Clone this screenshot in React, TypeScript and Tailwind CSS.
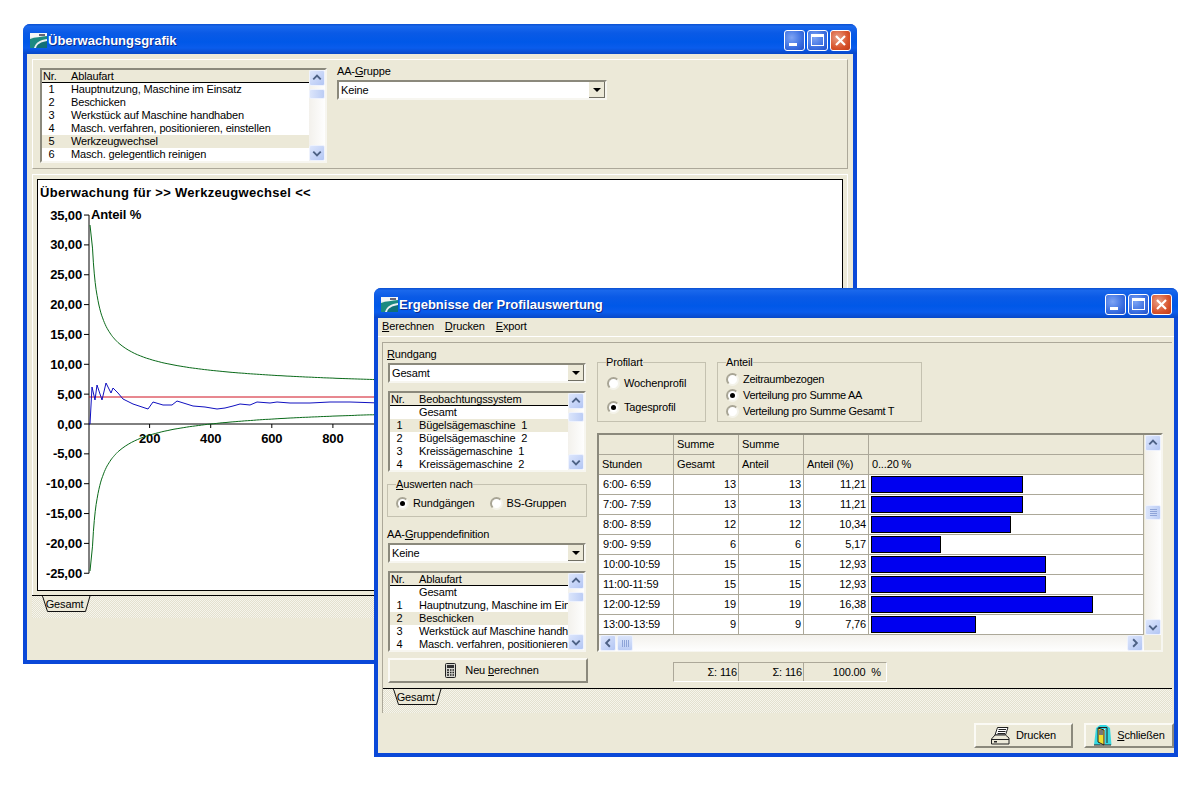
import React from 'react';

const listRows1 = [
  ['1', 'Hauptnutzung, Maschine im Einsatz'],
  ['2', 'Beschicken'],
  ['3', 'Werkstück auf Maschine handhaben'],
  ['4', 'Masch. verfahren, positionieren, einstellen'],
  ['5', 'Werkzeugwechsel'],
  ['6', 'Masch. gelegentlich reinigen'],
];

const listRows2 = [
  ['', 'Gesamt'],
  ['1', 'Bügelsägemaschine  1'],
  ['2', 'Bügelsägemaschine  2'],
  ['3', 'Kreissägemaschine  1'],
  ['4', 'Kreissägemaschine  2'],
];

const listRows3 = [
  ['', 'Gesamt'],
  ['1', 'Hauptnutzung, Maschine im Einsatz'],
  ['2', 'Beschicken'],
  ['3', 'Werkstück auf Maschine handhaben'],
  ['4', 'Masch. verfahren, positionieren, einstellen'],
];

const tableRows = [
  { time: '6:00- 6:59', total: 13, part: 13, pct: 11.21 },
  { time: '7:00- 7:59', total: 13, part: 13, pct: 11.21 },
  { time: '8:00- 8:59', total: 12, part: 12, pct: 10.34 },
  { time: '9:00- 9:59', total: 6, part: 6, pct: 5.17 },
  { time: '10:00-10:59', total: 15, part: 15, pct: 12.93 },
  { time: '11:00-11:59', total: 15, part: 15, pct: 12.93 },
  { time: '12:00-12:59', total: 19, part: 19, pct: 16.38 },
  { time: '13:00-13:59', total: 9, part: 9, pct: 7.76 },
];

const AppIcon = () => (
  <svg width="17" height="15" viewBox="0 0 17 15" className="shrink-0">
    <rect width="17" height="15" fill="#e8eef0" />
    <rect width="17" height="4" fill="#f4f6f6" />
    <path d="M0 15V6C5 4 11 4 17 3V6C10 7 6 9 4 15Z" fill="#1c8a80" />
    <path d="M6 15C7 11 11 9 17 8V15Z" fill="#0f6f78" />
    <rect x="9" y="1" width="6" height="2" fill="#667" />
  </svg>
);

const TitleButton = ({ kind }: { kind: 'min' | 'max' | 'close' }) => (
  <div
    className={
      'w-[21px] h-[21px] rounded-[3px] border border-white flex items-center justify-center ' +
      (kind === 'close'
        ? 'bg-[radial-gradient(circle_at_35%_35%,#e8a088,#d8532c_60%,#c03a18)]'
        : 'bg-[radial-gradient(circle_at_35%_35%,#7ea4f4,#3a6ee0_60%,#2350c8)]')
    }
  >
    {kind === 'min' && <div className="w-[8px] h-[3px] bg-white mt-[8px] mr-[3px]" />}
    {kind === 'max' && <div className="w-[13px] h-[12px] border border-white border-t-[3px]" />}
    {kind === 'close' && (
      <svg width="13" height="13" viewBox="0 0 13 13">
        <path d="M2 2L11 11M11 2L2 11" stroke="#fff" strokeWidth="2.2" />
      </svg>
    )}
  </div>
);

const Window = ({
  className,
  title,
  children,
}: {
  className: string;
  title: string;
  children: React.ReactNode;
}) => (
  <div className={'absolute flex flex-col rounded-t-[7px] bg-[#0a48d8] ' + className}>
    <div className="h-[30px] shrink-0 flex items-center rounded-t-[7px] pl-[7px] pr-[6px] pt-[2px] bg-[linear-gradient(180deg,#0a4fd0_0%,#1a68ec_8%,#0a5ae6_30%,#0058e8_60%,#0a5cec_80%,#0848c8_100%)]">
      <AppIcon />
      <span className="ml-[1px] mt-[1px] flex-1 text-[13px] font-bold text-white tracking-normal [text-shadow:1px_1px_#0f2a89]">
        {title}
      </span>
      <div className="flex gap-[2px]">
        <TitleButton kind="min" />
        <TitleButton kind="max" />
        <TitleButton kind="close" />
      </div>
    </div>
    <div className="flex-1 min-h-0 mx-[4px] mb-[4px] bg-[#ece9d8] flex flex-col">{children}</div>
  </div>
);

const ScrollButton = ({ dir }: { dir: 'up' | 'down' | 'left' | 'right' }) => {
  const d = {
    up: 'M3.5 9L7.5 5L11.5 9',
    down: 'M3.5 6L7.5 10L11.5 6',
    left: 'M9.5 3.5L5.5 7.5L9.5 11.5',
    right: 'M5.5 3.5L9.5 7.5L5.5 11.5',
  }[dir];
  return (
    <div className="w-[16px] h-[16px] shrink-0 rounded-[2px] border border-[#eef2fd] bg-[linear-gradient(135deg,#dde6fc,#b3c6f4)]">
      <svg width="14" height="14" viewBox="0 0 15 15">
        <path d={d} fill="none" stroke="#4d6185" strokeWidth="2" />
      </svg>
    </div>
  );
};

const VScroll = ({ thumbTop, grip }: { thumbTop: number; grip?: boolean }) => (
  <div className="w-[16px] h-full shrink-0 flex flex-col bg-[linear-gradient(90deg,#f3f1ec,#fefefe)]">
    <ScrollButton dir="up" />
    {/* thumb offset comes from the props of each list */}
    <div
      style={{ marginTop: thumbTop }}
      className={
        'w-[16px] shrink-0 rounded-[2px] border border-[#eef2fd] bg-[linear-gradient(90deg,#dbe5fb,#bccdf5)] flex flex-col items-center justify-center gap-[1px] ' +
        (grip ? 'h-[15px]' : 'h-[10px]')
      }
    >
      {grip && (
        <>
          <div className="w-[7px] h-[1px] bg-[#8ea4d8]" />
          <div className="w-[7px] h-[1px] bg-[#8ea4d8]" />
          <div className="w-[7px] h-[1px] bg-[#8ea4d8]" />
          <div className="w-[7px] h-[1px] bg-[#8ea4d8]" />
        </>
      )}
    </div>
    <div className="flex-1" />
    <ScrollButton dir="down" />
  </div>
);

const ListBox = ({
  className,
  head,
  rows,
  selected,
}: {
  className: string;
  head: string;
  rows: string[][];
  selected: number;
}) => (
  <div
    className={
      'flex bg-white border-2 border-t-[#8b897c] border-l-[#8b897c] border-b-[#f7f6f0] border-r-[#f7f6f0] ' +
      className
    }
  >
    <div className="flex-1 min-w-0 overflow-hidden flex flex-col">
      <div className="flex h-[13px] shrink-0 bg-[#ece9d8] border-b border-black leading-[12px] whitespace-pre">
        <span className="pl-[1px] shrink-0 w-[29px]">Nr.</span>
        <span>{head}</span>
      </div>
      {rows.map((r, i) => (
        <div
          key={i}
          className={'flex h-[13px] shrink-0 leading-[13px] whitespace-pre ' + (i === selected ? 'bg-[#ece9d8]' : '')}
        >
          <span className="pr-[10px] text-center shrink-0 w-[29px]">{r[0]}</span>
          <span>{r[1]}</span>
        </div>
      ))}
    </div>
    <VScroll thumbTop={3} />
  </div>
);

const Combo = ({ className, value }: { className: string; value: string }) => (
  <div
    className={
      'h-[20px] flex items-center bg-white border-2 border-t-[#8b897c] border-l-[#8b897c] border-b-[#f7f6f0] border-r-[#f7f6f0] ' +
      className
    }
  >
    <span className="flex-1 pl-[2px]">{value}</span>
    <div className="w-[16px] h-[16px] bg-[#ece9d8] border-b border-r border-[#716f64] flex items-center justify-center">
      <div className="w-0 h-0 border-x-[4px] border-x-transparent border-t-[4px] border-t-black" />
    </div>
  </div>
);

const Radio = ({ checked, label, tight }: { checked?: boolean; label: string; tight?: boolean }) => (
  <div className={'flex items-center gap-[4px] whitespace-pre leading-[13px] ' + (tight ? 'tracking-[-0.3px]' : '')}>
    <div className="w-[13px] h-[13px] rounded-full bg-white border-2 border-t-[#a8a595] border-l-[#a8a595] border-r-[#f4f3ea] border-b-[#f4f3ea] flex items-center justify-center">
      {checked && <div className="w-[5px] h-[5px] rounded-full bg-black" />}
    </div>
    <span>{label}</span>
  </div>
);

const Raised = ({ className, children }: { className: string; children: React.ReactNode }) => (
  <div
    className={
      'flex items-center justify-center bg-[#ece9d8] border-2 border-t-[#fbfaf5] border-l-[#fbfaf5] border-r-[#8b897c] border-b-[#8b897c] ' +
      className
    }
  >
    {children}
  </div>
);

const TabStrip = ({ className }: { className: string }) => (
  <div
    className={
      'shrink-0 border-t border-black bg-[repeating-conic-gradient(#e3e0cf_0_25%,#f6f5ec_0_50%)] bg-[length:2px_2px] ' + className
    }
  >
    <div className="relative ml-[10px] w-[49px] h-[17px] flex items-center justify-center pr-[4px] text-[11px]">
      <svg width="49" height="17" viewBox="0 0 49 17" className="absolute inset-0">
        <path d="M0.5 0L5.5 15.5H43.5L48 0" fill="#ece9d8" stroke="#111" strokeWidth="1" />
        <rect x="1" y="0" width="46" height="1" fill="#ece9d8" />
      </svg>
      <span className="relative">Gesamt</span>
    </div>
  </div>
);

// page coordinates, the svg viewBox below starts at the chart's corner
const px = (n: number) => 88.5 + n * 0.3055;
const py = (v: number) => 424 - v * 5.97;

const bluePoints =
  '89,424 90,424 92,387 95,400 97,385 102,400 106,383 111,393 113,388 118,393 123,399 133,404 148,409 153,402 163,405 172,405 177,401 193,406 205,407 217,409 225,408 233,406 240,404 250,405 257,402 270,403 277,402 290,403 310,403 330,402 350,402 380,403';

const greenLine = (sign: number) => {
  // first point is read off the picture, the curve starts a bit left of n = 10
  const pts: string[] = [sign > 0 ? '90,225' : '90,571'];
  for (let n = 13; n <= 1000; n += n < 100 ? 3 : 10) {
    pts.push(`${px(n).toFixed(1)},${py(4.5 + (sign * 90) / Math.sqrt(n)).toFixed(1)}`);
  }
  return pts.join(' ');
};

const Chart = () => {
  const yTicks = [35, 30, 25, 20, 15, 10, 5, 0, -5, -10, -15, -20, -25];
  return (
    <svg viewBox="38 200 804 390" className="w-[804px] h-[390px] shrink-0">
      <g fontFamily="'Liberation Sans', sans-serif" fontWeight="bold" fontSize="13" fill="#000">
        {yTicks.map((v) => (
          <g key={v}>
            <text x="82" y={py(v) + 4.5} textAnchor="end">
              {v.toFixed(2).replace('.', ',')}
            </text>
            <path d={`M84 ${py(v)}H89`} stroke="#000" />
          </g>
        ))}
        {[200, 400, 600, 800].map((v) => (
          <g key={v}>
            <text x={px(v)} y="443" textAnchor="middle">
              {v}
            </text>
            <path d={`M${px(v)} 424V428`} stroke="#000" />
          </g>
        ))}
        <text x="91" y="219">
          Anteil %
        </text>
      </g>
      <path d={`M89 ${py(35)}V${py(-25)}M89 424H380`} stroke="#000" fill="none" />
      <polyline points={greenLine(1)} fill="none" stroke="#0a6a1a" />
      <polyline points={greenLine(-1)} fill="none" stroke="#0a6a1a" />
      <path d="M89 397H380" stroke="#d01020" fill="none" />
      <polyline points={bluePoints} fill="none" stroke="#1010c0" />
    </svg>
  );
};

const CalcIcon = () => (
  <svg width="11" height="15" viewBox="0 0 11 15">
    <rect x="0.5" y="0.5" width="10" height="14" rx="1" fill="#d8d8d0" stroke="#222" />
    <rect x="2" y="2" width="7" height="3" fill="#333" />
    <path d="M2 7H4M5 7H6.5M7.5 7H9M2 9.5H4M5 9.5H6.5M7.5 9.5H9M2 12H4M5 12H6.5M7.5 12H9" stroke="#222" strokeWidth="1.4" />
  </svg>
);

const PrinterIcon = () => (
  <svg width="19" height="18" viewBox="0 0 19 18">
    <path d="M6.5 0.5H17L14.5 8H4Z" fill="#fff" stroke="#222" />
    <path d="M7.5 2.5H15M7 4.5H14.5M6.5 6.5H14" stroke="#222" />
    <path d="M4 8H14.5L18 11V17H0.5V12Z" fill="#ece9d8" stroke="#222" />
    <path d="M0.5 12.5H18" stroke="#222" />
    <rect x="3" y="14" width="3" height="1.5" fill="#222" />
  </svg>
);

const DoorIcon = () => (
  <svg width="19" height="21" viewBox="0 0 19 21">
    <path d="M1 20L3 3L7 0H13L17 3L18.5 20H12V4H7V20Z" fill="#37d8e0" />
    <path d="M5.5 2.5H14V18" fill="none" stroke="#222" />
    <path d="M5 3L11 5V20L5 17Z" fill="#f0e030" stroke="#222" />
    <rect x="6" y="5" width="4" height="5" fill="#777" />
    <path d="M1 20H18" stroke="#222" />
  </svg>
);

const cellBorder = 'border-r border-b border-[#aca899]';

const ResultTable = () => (
  <div className="mt-[11px] w-[566px] h-[219px] flex border-2 border-t-[#8b897c] border-l-[#8b897c] border-r-[#f7f6f0] border-b-[#f7f6f0]">
    <div className="flex-1 min-w-0 flex flex-col">
      <div className="grid grid-cols-[75px_65px_65px_65px_1fr] auto-rows-[20px] bg-white">
        {['', 'Summe', 'Summe', '', ''].map((t, i) => (
          <div key={i} className={'bg-[#ece9d8] pl-[3px] leading-[18px] ' + cellBorder}>
            {t}
          </div>
        ))}
        {['Stunden', 'Gesamt', 'Anteil', 'Anteil (%)', '0...20 %'].map((t) => (
          <div key={t} className={'bg-[#ece9d8] pl-[3px] leading-[18px] ' + cellBorder}>
            {t}
          </div>
        ))}
        {tableRows.map((r) => (
          <React.Fragment key={r.time}>
            <div className={'pl-[4px] leading-[19px] ' + cellBorder}>{r.time}</div>
            <div className={'pr-[2px] text-right leading-[19px] ' + cellBorder}>{r.total}</div>
            <div className={'pr-[2px] text-right leading-[19px] ' + cellBorder}>{r.part}</div>
            <div className={'pr-[2px] text-right leading-[19px] ' + cellBorder}>{r.pct.toFixed(2).replace('.', ',')}</div>
            <div className={'pl-[2px] pt-[1px] ' + cellBorder}>
              {/* bar length follows the percentage value */}
              <div style={{ width: Math.round(r.pct * 13.56) }} className="h-[17px] bg-[#0000f0] border border-black" />
            </div>
          </React.Fragment>
        ))}
      </div>
      <div className="flex-1 flex items-center px-[1px] bg-[linear-gradient(180deg,#f3f1ec,#fefefe)]">
        <ScrollButton dir="left" />
        <div className="ml-[1px] w-[16px] h-[16px] rounded-[2px] border border-[#eef2fd] bg-[linear-gradient(180deg,#dbe5fb,#bccdf5)] flex items-center justify-center gap-[1px]">
          <div className="w-[1px] h-[7px] bg-[#8ea4d8]" />
          <div className="w-[1px] h-[7px] bg-[#8ea4d8]" />
          <div className="w-[1px] h-[7px] bg-[#8ea4d8]" />
          <div className="w-[1px] h-[7px] bg-[#8ea4d8]" />
        </div>
        <div className="flex-1" />
        <ScrollButton dir="right" />
      </div>
    </div>
    <div className="w-[17px] shrink-0 flex flex-col">
      <div className="h-[200px] pl-[1px]">
        <VScroll thumbTop={54} grip />
      </div>
    </div>
  </div>
);

const SummaryRow = () => (
  <div className="mt-[10px] ml-[76px] flex h-[20px] w-[214px] leading-[19px] border border-[#aca899] border-r-white border-b-white">
    <div className="w-[65px] pr-[1px] text-right border-r border-[#aca899]">Σ: 116</div>
    <div className="w-[65px] pr-[1px] text-right border-r border-[#aca899]">Σ: 116</div>
    <div className="flex-1 pr-[5px] text-right whitespace-pre">100.00  %</div>
  </div>
);

export default function App() {
  return (
    <div className="relative w-[1200px] h-[794px] overflow-hidden bg-white text-black text-[11px] tracking-[-0.15px] font-['Liberation_Sans',Arial,sans-serif]">
      <Window className="left-[23px] top-[24px] w-[834px] h-[640px]" title="Überwachungsgrafik">
        <div className="mx-[5px] mt-[5px] h-[110px] shrink-0 flex border border-t-white border-l-white border-r-[#aca899] border-b-[#aca899] pl-[7px] pt-[5px]">
          <ListBox className="w-[287px] h-[95px] mt-[3px]" head="Ablaufart" rows={listRows1} selected={4} />
          <div className="ml-[10px]">
            <div className="h-[13px] leading-[12px]">
              AA-<u>G</u>ruppe
            </div>
            <Combo className="w-[270px] mt-[2px]" value="Keine" />
          </div>
        </div>
        <div className="mx-[5px] mt-[5px] flex-1 min-h-0 flex flex-col">
          <div className="border-t border-l border-r border-white p-[4px] pb-[4px]">
            <div className="h-[412px] bg-white border border-black flex flex-col overflow-hidden">
              <div className="h-[15px] pl-[2px] mt-[5px] shrink-0 text-[13px] leading-[15px] font-bold tracking-[0.3px]">
                Überwachung für &gt;&gt; Werkzeugwechsel &lt;&lt;
              </div>
              <Chart />
            </div>
          </div>
          <TabStrip className="h-[23px]" />
        </div>
      </Window>

      <Window className="left-[374px] top-[288px] w-[804px] h-[469px]" title="Ergebnisse der Profilauswertung">
        <div className="h-[19px] shrink-0 flex items-center gap-[11px] pl-[4px] pb-[2px] text-[11px] border-b border-white">
          <span>
            <u>B</u>erechnen
          </span>
          <span>
            <u>D</u>rucken
          </span>
          <span>
            <u>E</u>xport
          </span>
        </div>
        <div className="ml-[4px] mr-[2px] mt-[5px] shrink-0 flex flex-col border-t border-l border-[#aca899]">
          <div className="flex h-[345px] shrink-0">
            <div className="w-[213px] shrink-0 pl-[4px] pt-[5px]">
              <div className="h-[13px] leading-[13px]">
                <u>R</u>undgang
              </div>
              <Combo className="w-[198px] ml-[1px] mt-[2px]" value="Gesamt" />
              <ListBox
                className="w-[198px] h-[81px] ml-[1px] mt-[8px]"
                head="Beobachtungssystem"
                rows={listRows2}
                selected={1}
              />
              <fieldset className="w-[200px] h-[39px] mt-[6px] border border-[#c4c1b0] pl-[8px]">
                <legend className="leading-[12px]">
                  <u>A</u>uswerten nach
                </legend>
                <div className="flex gap-[15px] mt-[7px]">
                  <Radio checked label="Rundgängen" />
                  <Radio label="BS-Gruppen" />
                </div>
              </fieldset>
              <div className="h-[13px] leading-[13px] mt-[11px]">
                AA-<u>G</u>ruppendefinition
              </div>
              <Combo className="w-[198px] ml-[1px] mt-[2px]" value="Keine" />
              <ListBox
                className="w-[198px] h-[81px] ml-[1px] mt-[8px]"
                head="Ablaufart"
                rows={listRows3}
                selected={2}
              />
              <Raised className="w-[200px] h-[25px] ml-[1px] mt-[6px] gap-[9px] pl-[8px] text-[11px]">
                <CalcIcon />
                <span>
                  Neu <u>b</u>erechnen
                </span>
              </Raised>
            </div>
            <div className="flex-1 min-w-0 pl-[1px] pt-[13px]">
              <div className="flex gap-[11px]">
                <fieldset className="w-[109px] h-[66px] border border-[#c4c1b0] pl-[9px]">
                  <legend className="leading-[12px] -ml-[1px]">Profilart</legend>
                  <div className="flex flex-col gap-[11px] mt-[9px]">
                    <Radio label="Wochenprofil" />
                    <Radio checked label="Tagesprofil" />
                  </div>
                </fieldset>
                <fieldset className="w-[205px] h-[66px] border border-[#c4c1b0] pl-[8px]">
                  <legend className="leading-[12px]">Anteil</legend>
                  <div className="flex flex-col gap-[3px] mt-[5px]">
                    <Radio tight label="Zeitraumbezogen" />
                    <Radio tight checked label="Verteilung pro Summe AA" />
                    <Radio tight label="Verteilung pro Summe Gesamt T" />
                  </div>
                </fieldset>
              </div>
              <ResultTable />
              <SummaryRow />
            </div>
          </div>
          <TabStrip className="h-[25px]" />
        </div>
        <div className="flex justify-end gap-[11px] mt-[10px] mr-0">
          <Raised className="w-[99px] h-[25px] gap-[6px]">
            <PrinterIcon />
            <span>Drucken</span>
          </Raised>
          <Raised className="w-[90px] h-[25px] gap-[5px]">
            <DoorIcon />
            <span>
              <u>S</u>chließen
            </span>
          </Raised>
        </div>
      </Window>
    </div>
  );
}
